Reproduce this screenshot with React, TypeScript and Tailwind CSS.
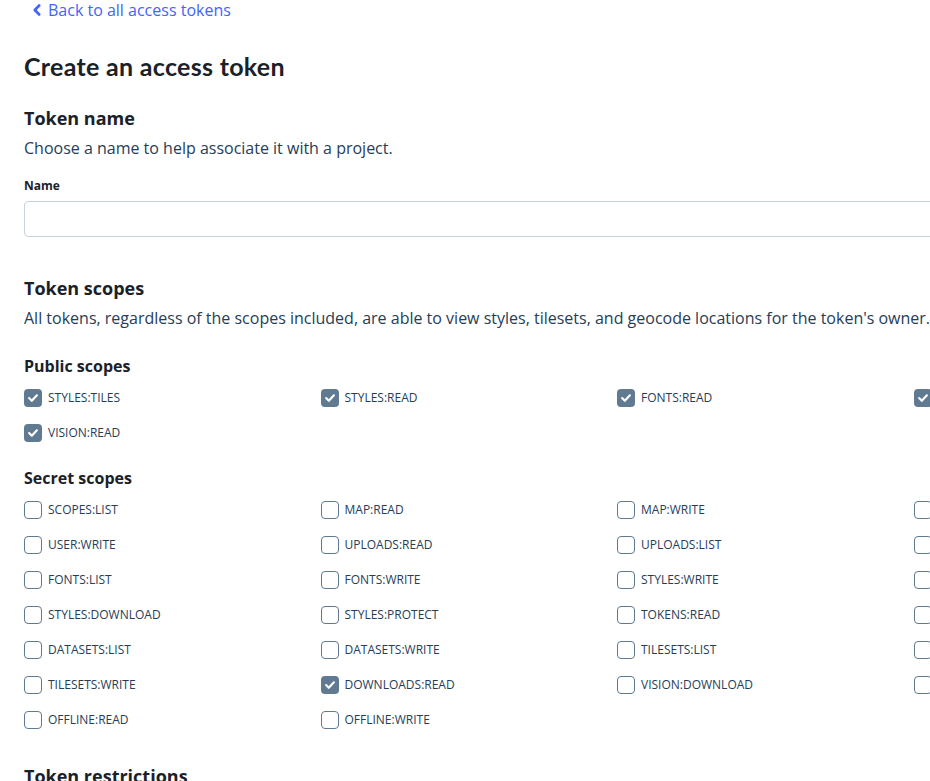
import React from "react";

const publicScopes: { label: string; checked: boolean }[] = [
  { label: "STYLES:TILES", checked: true },
  { label: "STYLES:READ", checked: true },
  { label: "FONTS:READ", checked: true },
  { label: "DATASETS:READ", checked: true },
  { label: "VISION:READ", checked: true },
];

const secretScopes: { label: string; checked: boolean }[] = [
  { label: "SCOPES:LIST", checked: false },
  { label: "MAP:READ", checked: false },
  { label: "MAP:WRITE", checked: false },
  { label: "USER:READ", checked: false },
  { label: "USER:WRITE", checked: false },
  { label: "UPLOADS:READ", checked: false },
  { label: "UPLOADS:LIST", checked: false },
  { label: "UPLOADS:WRITE", checked: false },
  { label: "FONTS:LIST", checked: false },
  { label: "FONTS:WRITE", checked: false },
  { label: "STYLES:WRITE", checked: false },
  { label: "STYLES:LIST", checked: false },
  { label: "STYLES:DOWNLOAD", checked: false },
  { label: "STYLES:PROTECT", checked: false },
  { label: "TOKENS:READ", checked: false },
  { label: "TOKENS:WRITE", checked: false },
  { label: "DATASETS:LIST", checked: false },
  { label: "DATASETS:WRITE", checked: false },
  { label: "TILESETS:LIST", checked: false },
  { label: "TILESETS:READ", checked: false },
  { label: "TILESETS:WRITE", checked: false },
  { label: "DOWNLOADS:READ", checked: true },
  { label: "VISION:DOWNLOAD", checked: false },
  { label: "NAVIGATION:DOWNLOAD", checked: false },
  { label: "OFFLINE:READ", checked: false },
  { label: "OFFLINE:WRITE", checked: false },
];

function Checkbox({ label, checked }: { label: string; checked: boolean }) {
  return (
    <label className="flex items-center gap-[6px] h-6 cursor-pointer">
      {checked ? (
        <span className="w-[18px] h-[18px] rounded-[4px] bg-[#607b91] flex items-center justify-center shrink-0">
          <svg width="12" height="12" viewBox="0 0 12 12" fill="none">
            <path d="M2.1 6.1 L4.8 8.8 L9.9 3.3" stroke="white" strokeWidth="2.1" strokeLinecap="round" strokeLinejoin="round" />
          </svg>
        </span>
      ) : (
        <span className="w-[18px] h-[18px] rounded-[4px] border-[1.5px] border-[#607b91] bg-white shrink-0" />
      )}
      <span className="text-[12px] leading-[18px] text-[#273d56]">{label}</span>
    </label>
  );
}

export default function App() {
  return (
    <div className="w-[930px] h-[781px] overflow-hidden bg-white" style={{ fontFamily: '"Open Sans", sans-serif' }}>
      <div className="w-[1210px] pl-6 text-[#1b2129]">
        <a className="flex items-center h-5 gap-[7px] pl-[9px] text-[16px] text-[#4264fb]">
          <svg width="8" height="12" viewBox="0 0 8 12" fill="none">
            <path d="M6.2 1.5 L1.8 6 L6.2 10.5" stroke="#4264fb" strokeWidth="2.6" strokeLinecap="round" strokeLinejoin="round" />
          </svg>
          <span className="leading-5">Back to all access tokens</span>
        </a>

        <h1 className="mt-[30px] text-[25px] leading-8 font-bold tracking-[0.3px] text-[#1b2129]" style={{ fontFamily: 'Lato, sans-serif' }}>
          Create an access token
        </h1>

        <h2 className="mt-6 text-[18px] leading-6 font-bold">Token name</h2>
        <p className="mt-[6px] text-[16px] leading-6 text-[#273d56]">Choose a name to help associate it with a project.</p>

        <div className="mt-[17px] text-[12px] leading-[18px] font-bold">Name</div>
        <input className="mt-[6px] block w-full h-9 rounded-[4px] border border-[#c6d2dc] px-3 outline-none" />

        <h2 className="mt-[39px] text-[18px] leading-6 font-bold">Token scopes</h2>
        <p className="mt-[6px] text-[16px] leading-6 text-[#273d56] whitespace-nowrap">
          All tokens, regardless of the scopes included, are able to view styles, tilesets, and geocode locations for the token's owner.
        </p>

        <h3 className="mt-6 text-[16px] leading-6 font-bold">Public scopes</h3>
        <div className="mt-[8px] grid grid-cols-4 gap-y-[11px]">
          {publicScopes.map((s) => (
            <Checkbox key={s.label} label={s.label} checked={s.checked} />
          ))}
        </div>

        <h3 className="mt-[21px] text-[16px] leading-6 font-bold">Secret scopes</h3>
        <div className="mt-[8px] grid grid-cols-4 gap-y-[11px]">
          {secretScopes.map((s) => (
            <Checkbox key={s.label} label={s.label} checked={s.checked} />
          ))}
        </div>

        <h2 className="mt-8 text-[18px] leading-6 font-bold">Token restrictions</h2>
        <p className="mt-[6px] text-[16px] leading-6 text-[#273d56]">Restrict this token to specific URLs.</p>
      </div>
    </div>
  );
}
